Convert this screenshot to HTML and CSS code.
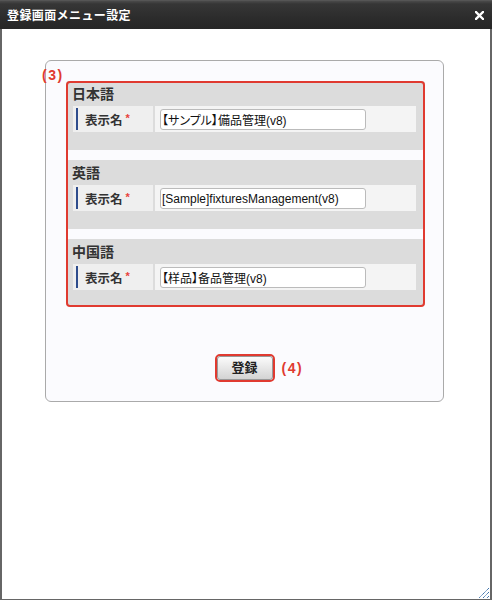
FILE: index.html
```html
<!DOCTYPE html>
<html lang="ja">
<head>
<meta charset="utf-8">
<title>登録画面メニュー設定</title>
<link rel="stylesheet" href="styles.css">
</head>
<body>
<div class="window">
  <div class="titlebar">
    <span class="title">登録画面メニュー設定</span>
    <svg class="close" width="9" height="9" viewBox="0 0 9 9"><path d="M1 1L8 8M8 1L1 8" stroke="#fff" stroke-width="2.4" stroke-linecap="square"/></svg>
  </div>
  <div class="content">
    <div class="panel">
      <div class="langs">
        <span class="note note-3">(3)</span>
        <div class="section">
          <div class="sec-head">日本語</div>
          <div class="row">
            <div class="label"><div class="label-in">表示名<span class="req">*</span></div></div>
            <div class="value"><input class="field" type="text" value="【サンプル】備品管理(v8)"></div>
          </div>
        </div>
        <div class="section">
          <div class="sec-head">英語</div>
          <div class="row">
            <div class="label"><div class="label-in">表示名<span class="req">*</span></div></div>
            <div class="value"><input class="field" type="text" value="[Sample]fixturesManagement(v8)"></div>
          </div>
        </div>
        <div class="section last">
          <div class="sec-head">中国語</div>
          <div class="row">
            <div class="label"><div class="label-in">表示名<span class="req">*</span></div></div>
            <div class="value"><input class="field" type="text" value="【样品】备品管理(v8)"></div>
          </div>
        </div>
      </div>
      <div class="actions">
        <div class="btn-hl">
          <button class="btn" type="button">登録</button>
          <span class="note note-4">(4)</span>
        </div>
      </div>
    </div>
  </div>
  <svg class="grip" width="12" height="12" viewBox="0 0 12 12">
    <path d="M11 1L1 11M11 5L5 11M11 9L9 11" stroke="#1d5a9c" stroke-width="1" stroke-dasharray="1.2 0.6"/>
  </svg>
</div>
</body>
</html>
```
FILE: styles.css
```css
* { box-sizing: border-box; }
html, body { margin: 0; padding: 0; background: #fff; }
body {
  font-family: "Liberation Sans", "Noto Sans CJK JP", sans-serif;
  color: #333;
}
.window {
  position: relative;
  width: 492px;
  height: 600px;
  border-left: 2px solid #666;
  border-right: 2px solid #666;
  border-bottom: 1px solid #666;
  background: #fff;
  display: flex;
  flex-direction: column;
}
.titlebar {
  height: 29px;
  margin: 0 -2px;
  padding: 0 8px 0 7px;
  display: flex;
  align-items: center;
  justify-content: space-between;
  background: linear-gradient(#4a4a4a 0, #363636 3px, #2c2c2c 60%, #262626 100%);
  border-top: 1px solid #555;
}
.title {
  color: #fff;
  font-weight: bold;
  font-size: 12px;
  letter-spacing: 0.4px;
  line-height: 28px;
  padding-top: 1px;
}
.close { display: block; margin-top: 1px; }
.content {
  padding: 31px 0 0 43px;
}
.panel {
  width: 399px;
  height: 342px;
  border: 1px solid #aaa;
  border-radius: 6px;
  background: #fbfbfe;
  padding: 20px 18px 0 20px;
}
.langs {
  position: relative;
  width: 359px;
  height: 226px;
  border-radius: 4px;
}
.langs::after {
  content: "";
  position: absolute;
  inset: 0;
  border: 2px solid #e03a30;
  border-radius: 4px;
  pointer-events: none;
}
.note {
  position: absolute;
  color: #e03a30;
  font-weight: bold;
  font-size: 14px;
  letter-spacing: 1.5px;
  line-height: 16px;
  white-space: nowrap;
}
.note-3 { left: -24px; top: -14px; }
.note-4 { left: 65px; top: 4px; }
.section {
  background: #dcdcdc;
  border-radius: 3px;
  padding: 0 9px 18px 7px;
  margin-bottom: 10px;
}
.section.last { margin-bottom: 0; padding-bottom: 16px; }
.sec-head {
  font-size: 14px;
  font-weight: bold;
  color: #333;
  line-height: 23px;
  padding-top: 2px;
  margin-left: -1px;
}
.row {
  display: flex;
  gap: 2px;
  height: 26px;
}
.label {
  width: 80px;
  background: #efefef;
  padding: 2px 0 2px 3px;
}
.label-in {
  height: 22px;
  border-left: 2px solid #2e4c8c;
  padding-left: 7px;
  font-size: 12.5px;
  font-weight: bold;
  color: #333;
  line-height: 21px;
  white-space: nowrap;
}
.req {
  color: #e8413a;
  font-size: 11px;
  font-weight: bold;
  margin-left: 3px;
  vertical-align: 3px;
}
.value {
  flex: 1;
  background: #f4f4f4;
  padding: 3px 0 0 5px;
}
.field {
  display: block;
  width: 206px;
  height: 21px;
  margin: 0;
  border: 1px solid #bbb;
  border-radius: 3px;
  background: #fff;
  padding: 0 2px 0 1px;
  font-family: "Liberation Sans", "Noto Sans CJK JP", sans-serif;
  font-size: 12px;
  font-feature-settings: "palt";
  color: #111;
  outline: none;
}
.actions {
  display: flex;
  justify-content: center;
  margin-top: 47px;
  margin-left: -2px;
}
.btn-hl {
  position: relative;
  border: 2px solid #e03a30;
  border-radius: 5px;
}
.btn {
  display: block;
  width: 56px;
  height: 24px;
  margin: 0;
  padding: 0;
  border: 1px solid #999;
  border-radius: 3px;
  background: linear-gradient(#fbfbfb, #e9e9e9 45%, #d3d3d3);
  font-family: "Liberation Sans", "Noto Sans CJK JP", sans-serif;
  font-size: 13px;
  font-weight: bold;
  color: #222;
  line-height: 22px;
}
.grip {
  position: absolute;
  right: 0;
  bottom: 0;
}
```
